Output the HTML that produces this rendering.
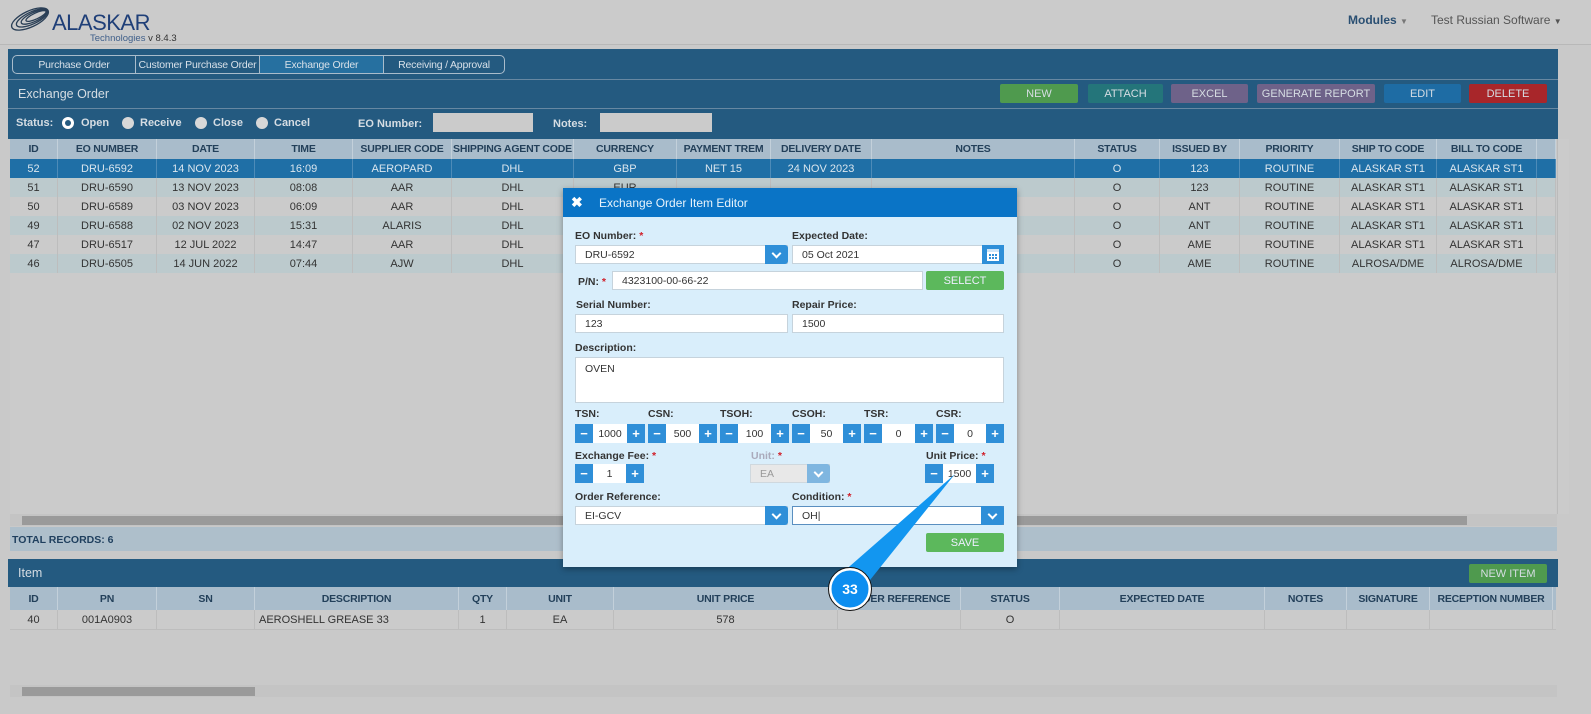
<!DOCTYPE html><html><head><style>
*{box-sizing:border-box;margin:0;padding:0;white-space:nowrap}
body{width:1591px;height:714px;background:#c9c9c9;font-family:"Liberation Sans",sans-serif;font-size:11px;color:#333;position:relative;overflow:hidden}
.a{position:absolute}
.c{display:flex;align-items:center;justify-content:center}
.th{position:absolute;top:0;height:100%;display:flex;align-items:center;justify-content:center;font-weight:bold;color:#23405a;border-right:1px solid #c3d0da;font-size:10.5px;letter-spacing:-0.2px;overflow:hidden}
.td{position:absolute;top:0;height:100%;display:flex;align-items:center;justify-content:center;border-right:1px solid #bdbdbd}
.btn{position:absolute;top:84px;height:19px;border-radius:2px;color:#d6dde3;font-size:11px;display:flex;align-items:center;justify-content:center}
.lbl{position:absolute;font-weight:bold;color:#333;font-size:10.5px}
.req{color:#d0202a}
.inp{position:absolute;background:#fff;border:1px solid #c6d3dc;height:19px;display:flex;align-items:center;padding-left:9px;font-size:10.5px}
.dd{position:absolute;right:-1px;top:-1px;width:23px;height:19px;background:#2f8fd8;border-radius:0 3px 3px 0}
.dd:after{content:"";position:absolute;left:8px;top:5px;width:5px;height:5px;border-right:2px solid #fff;border-bottom:2px solid #fff;transform:rotate(45deg)}
.sp{position:absolute;height:19px;display:flex}
.sp .m,.sp .p{width:18px;background:#2f8fd8;color:#fff;font-weight:bold;display:flex;align-items:center;justify-content:center;font-size:13px}
.sp .v{flex:1;background:#fff;display:flex;align-items:center;justify-content:center;font-size:10.5px}
.radio{position:absolute;top:117px;width:12px;height:12px;border-radius:50%;background:#d8d8d8}
</style></head><body>
<div class="a" style="left:0;top:0;width:1591px;height:45px;background:#cbcbcb;border-bottom:1px solid #b8b8b8"></div>
<svg class="a" style="left:8px;top:4px" width="60" height="30" viewBox="0 0 60 30"><g fill="none" stroke="#2a3f56" stroke-width="1.3"><ellipse cx="22" cy="15" rx="20" ry="8" transform="rotate(-25 22 15)"/><ellipse cx="24" cy="14" rx="17" ry="6" transform="rotate(-25 24 14)"/><ellipse cx="26" cy="13" rx="14" ry="4.5" transform="rotate(-25 26 13)"/><ellipse cx="28" cy="12" rx="11" ry="3" transform="rotate(-25 28 12)"/></g></svg>
<div class="a" style="left:52px;top:10px;font-size:22px;color:#1f3f78;letter-spacing:-0.5px">ALASKAR</div>
<div class="a" style="left:90px;top:33px;font-size:9.5px;color:#3f5f8a">Technologies <span style="color:#333">v 8.4.3</span></div>
<div class="a" style="left:1348px;top:13px;font-size:12px;font-weight:bold;color:#2a4f72">Modules <span style="font-size:8px;color:#777">▼</span></div>
<div class="a" style="left:1431px;top:13px;font-size:12px;color:#555">Test Russian Software <span style="font-size:8px">▼</span></div>
<div class="a" style="left:8px;top:49px;width:1550px;height:90px;background:#245a80"></div>
<div class="a" style="left:12px;top:55px;width:493px;height:19px;border:1px solid #a9bccb;border-radius:5px;display:flex;color:#d7e0e8;overflow:hidden;font-size:10.5px;letter-spacing:-0.2px">
<div class="c" style="width:123px;border-right:1px solid #a9bccb">Purchase Order</div>
<div class="c" style="width:124px;border-right:1px solid #a9bccb">Customer Purchase Order</div>
<div class="c" style="width:124px;border-right:1px solid #a9bccb;background:#2670a0">Exchange Order</div>
<div class="c" style="flex:1">Receiving / Approval</div></div>
<div class="a" style="left:8px;top:79px;width:1550px;border-top:1px solid #6788a2"></div>
<div class="a" style="left:18px;top:87px;font-size:12.5px;color:#d6dde3">Exchange Order</div>
<div class="btn" style="left:1000px;width:78px;background:#4f9a4e">NEW</div>
<div class="btn" style="left:1088px;width:75px;background:#24757a">ATTACH</div>
<div class="btn" style="left:1171px;width:77px;background:#6e6289">EXCEL</div>
<div class="btn" style="left:1257px;width:118px;background:#6e6289">GENERATE REPORT</div>
<div class="btn" style="left:1384px;width:77px;background:#1e6ca4">EDIT</div>
<div class="btn" style="left:1469px;width:78px;background:#a8262a">DELETE</div>
<div class="a" style="left:8px;top:108px;width:1550px;border-top:1px solid #6788a2"></div>
<div class="a" style="left:16px;top:117px;font-weight:bold;color:#d6dde3">Status:</div>
<div class="radio" style="left:62px;background:#fff"><div style="position:absolute;left:3px;top:3px;width:6px;height:6px;border-radius:50%;background:#245a80"></div></div>
<div class="a" style="left:81px;top:117px;font-weight:bold;color:#d6dde3">Open</div>
<div class="radio" style="left:122px"></div><div class="a" style="left:140px;top:117px;font-weight:bold;color:#d6dde3">Receive</div>
<div class="radio" style="left:195px"></div><div class="a" style="left:213px;top:117px;font-weight:bold;color:#d6dde3">Close</div>
<div class="radio" style="left:256px"></div><div class="a" style="left:274px;top:117px;font-weight:bold;color:#d6dde3">Cancel</div>
<div class="a" style="left:358px;top:118px;font-weight:bold;color:#d6dde3">EO Number:</div>
<div class="a" style="left:433px;top:113px;width:100px;height:19px;background:#cbcbcb"></div>
<div class="a" style="left:553px;top:118px;font-weight:bold;color:#d6dde3">Notes:</div>
<div class="a" style="left:600px;top:113px;width:112px;height:19px;background:#cbcbcb"></div>
<div class="a" id="mh" style="left:10px;top:139px;width:1546px;height:20px;background:#a9bccb"></div>
<div class="a" style="left:10px;top:159px;width:1546px;height:355px;background:#cbcbcb"></div>
<div id="mrows"></div>
<div class="a" style="left:1557px;top:139px;width:12px;height:375px;background:#cbcbcb;border-left:1px solid #bbb"></div>
<div class="a" style="left:10px;top:514px;width:1547px;height:12px;background:#c4c4c4"></div>
<div class="a" style="left:22px;top:516px;width:1445px;height:9px;background:#9a9a9a"></div>
<div class="a" style="left:10px;top:527px;width:1547px;height:24px;background:#aebfcb"></div>
<div class="a" style="left:12px;top:534px;font-weight:bold;color:#1f3f5e;font-size:10.5px">TOTAL RECORDS: 6</div>
<div class="a" style="left:8px;top:559px;width:1550px;height:28px;background:#245a80"></div>
<div class="a" style="left:18px;top:566px;font-size:12.5px;color:#d6dde3">Item</div>
<div class="a c" style="left:1469px;top:564px;width:78px;height:19px;background:#4f9a4e;color:#d6dde3;border-radius:2px">NEW ITEM</div>
<div class="a" id="ih" style="left:10px;top:587px;width:1546px;height:23px;background:#a9bccb"></div>
<div id="irows"></div>
<div class="a" style="left:10px;top:685px;width:1547px;height:12px;background:#c4c4c4"></div>
<div class="a" style="left:22px;top:687px;width:233px;height:9px;background:#9a9a9a"></div>
<div class="a" style="left:563px;top:188px;width:454px;height:379px;background:#d9eefb;box-shadow:0 2px 6px rgba(0,0,0,.35)"></div>
<div class="a" style="left:563px;top:188px;width:454px;height:29px;background:#0a74c6"></div>
<div class="a" style="left:571px;top:194px;color:#fff;font-size:14px;font-weight:bold">✖</div>
<div class="a" style="left:599px;top:196px;color:#e8f3fb;font-size:12px">Exchange Order Item Editor</div>
<div class="lbl" style="left:575px;top:230px">EO Number: <span class="req">*</span></div>
<div class="inp" style="left:575px;top:245px;width:213px">DRU-6592<div class="dd"></div></div>
<div class="lbl" style="left:792px;top:230px">Expected Date:</div>
<div class="inp" style="left:792px;top:245px;width:212px">05 Oct 2021<div class="a" style="right:-1px;top:-1px;width:22px;height:19px;background:#2f8fd8"><svg width="22" height="19"><rect x="5" y="4" width="12" height="12" fill="#fff"/><rect x="5" y="4" width="12" height="3" fill="#cfe6f8"/><g fill="#2f8fd8"><rect x="7" y="9" width="2" height="2"/><rect x="10" y="9" width="2" height="2"/><rect x="13" y="9" width="2" height="2"/><rect x="7" y="12" width="2" height="2"/><rect x="10" y="12" width="2" height="2"/><rect x="13" y="12" width="2" height="2"/></g></svg></div></div>
<div class="lbl" style="left:578px;top:276px">P/N: <span class="req">*</span></div>
<div class="inp" style="left:612px;top:271px;width:311px">4323100-00-66-22</div>
<div class="a c" style="left:926px;top:271px;width:78px;height:19px;background:#5cb85c;color:#eef;border-radius:2px">SELECT</div>
<div class="lbl" style="left:576px;top:299px">Serial Number:</div>
<div class="inp" style="left:575px;top:314px;width:213px">123</div>
<div class="lbl" style="left:792px;top:299px">Repair Price:</div>
<div class="inp" style="left:792px;top:314px;width:212px">1500</div>
<div class="lbl" style="left:575px;top:342px">Description:</div>
<div class="inp" style="left:575px;top:357px;width:429px;height:46px;align-items:flex-start;padding-top:5px">OVEN</div>
<div class="lbl" style="left:575px;top:408px">TSN:</div><div class="lbl" style="left:648px;top:408px">CSN:</div><div class="lbl" style="left:720px;top:408px">TSOH:</div><div class="lbl" style="left:792px;top:408px">CSOH:</div><div class="lbl" style="left:864px;top:408px">TSR:</div><div class="lbl" style="left:936px;top:408px">CSR:</div>
<div class="sp" style="left:575px;top:424px;width:70px"><div class="m">−</div><div class="v">1000</div><div class="p">+</div></div>
<div class="sp" style="left:648px;top:424px;width:69px"><div class="m">−</div><div class="v">500</div><div class="p">+</div></div>
<div class="sp" style="left:720px;top:424px;width:69px"><div class="m">−</div><div class="v">100</div><div class="p">+</div></div>
<div class="sp" style="left:792px;top:424px;width:69px"><div class="m">−</div><div class="v">50</div><div class="p">+</div></div>
<div class="sp" style="left:864px;top:424px;width:69px"><div class="m">−</div><div class="v">0</div><div class="p">+</div></div>
<div class="sp" style="left:936px;top:424px;width:68px"><div class="m">−</div><div class="v">0</div><div class="p">+</div></div>
<div class="lbl" style="left:575px;top:450px">Exchange Fee: <span class="req">*</span></div>
<div class="sp" style="left:575px;top:464px;width:69px"><div class="m">−</div><div class="v">1</div><div class="p">+</div></div>
<div class="lbl" style="left:751px;top:450px;color:#aab">Unit: <span class="req">*</span></div>
<div class="inp" style="left:750px;top:464px;width:80px;background:#e8e8e8;color:#999;border-color:#cfd8de">EA<div class="dd" style="background:#7fb6e0"></div></div>
<div class="lbl" style="left:926px;top:450px">Unit Price: <span class="req">*</span></div>
<div class="sp" style="left:925px;top:464px;width:69px"><div class="m">−</div><div class="v">1500</div><div class="p">+</div></div>
<div class="lbl" style="left:575px;top:491px">Order Reference:</div>
<div class="inp" style="left:575px;top:506px;width:213px">EI-GCV<div class="dd"></div></div>
<div class="lbl" style="left:792px;top:491px">Condition: <span class="req">*</span></div>
<div class="inp" style="left:792px;top:506px;width:212px;border-color:#5a8fc0">OH|<div class="dd"></div></div>
<div class="a c" style="left:926px;top:533px;width:78px;height:19px;background:#5cb85c;color:#eef;border-radius:2px">SAVE</div>
<svg class="a" style="left:0;top:0" width="1591" height="714"><polygon points="955,474 834,580 866,585" fill="#1296f0"/><circle cx="850" cy="589" r="20" fill="#0d8ef0" stroke="#fff" stroke-width="3"/><circle cx="850" cy="589" r="21.5" fill="none" stroke="#111" stroke-width="1"/><text x="850" y="594" text-anchor="middle" font-family="Liberation Sans" font-weight="bold" font-size="14" fill="#fff">33</text></svg>
<script>
function hdr(id,cols,names){var e=document.getElementById(id),h='';for(var i=0;i<names.length;i++){h+='<div class="th" style="left:'+(cols[i]-10)+'px;width:'+(cols[i+1]-cols[i])+'px">'+names[i]+'</div>';}e.innerHTML=h;}
var mc=[10,58,157,255,353,452,574,677,771,872,1075,1160,1240,1340,1437,1537,1556];
hdr('mh',mc,['ID','EO NUMBER','DATE','TIME','SUPPLIER CODE','SHIPPING AGENT CODE','CURRENCY','PAYMENT TREM','DELIVERY DATE','NOTES','STATUS','ISSUED BY','PRIORITY','SHIP TO CODE','BILL TO CODE','']);
var rows=[['52','DRU-6592','14 NOV 2023','16:09','AEROPARD','DHL','GBP','NET 15','24 NOV 2023','','O','123','ROUTINE','ALASKAR ST1','ALASKAR ST1',''],
['51','DRU-6590','13 NOV 2023','08:08','AAR','DHL','EUR','','','','O','123','ROUTINE','ALASKAR ST1','ALASKAR ST1',''],
['50','DRU-6589','03 NOV 2023','06:09','AAR','DHL','','','','','O','ANT','ROUTINE','ALASKAR ST1','ALASKAR ST1',''],
['49','DRU-6588','02 NOV 2023','15:31','ALARIS','DHL','','','','','O','ANT','ROUTINE','ALASKAR ST1','ALASKAR ST1',''],
['47','DRU-6517','12 JUL 2022','14:47','AAR','DHL','','','','','O','AME','ROUTINE','ALASKAR ST1','ALASKAR ST1',''],
['46','DRU-6505','14 JUN 2022','07:44','AJW','DHL','','','','','O','AME','ROUTINE','ALROSA/DME','ALROSA/DME','']];
var h='';rows.forEach(function(r,k){var bg=k==0?'#1f6fa6':(k%2?'#bccacd':'#cbcbcb');var col=k==0?'#dbe6ee':'#333';h+='<div class="a" style="left:10px;top:'+(159+k*19)+'px;width:1546px;height:19px;background:'+bg+';color:'+col+'">';for(var i=0;i<r.length;i++)h+='<div class="td" style="left:'+(mc[i]-10)+'px;width:'+(mc[i+1]-mc[i])+'px;'+(k==0?'border-color:#4d8bb8':'')+'">'+r[i]+'</div>';h+='</div>';});
document.getElementById('mrows').innerHTML=h;
var ic=[10,58,157,255,459,507,614,838,961,1060,1265,1347,1430,1553];
hdr('ih',ic,['ID','PN','SN','DESCRIPTION','QTY','UNIT','UNIT PRICE','ORDER REFERENCE','STATUS','EXPECTED DATE','NOTES','SIGNATURE','RECEPTION NUMBER']);
var ir=['40','001A0903','','AEROSHELL GREASE 33','1','EA','578','','O','','','',''];
h='<div class="a" style="left:10px;top:610px;width:1546px;height:20px;background:#cbcbcb;border-bottom:1px solid #bdbdbd">';for(var i=0;i<ir.length;i++)h+='<div class="td" style="left:'+(ic[i]-10)+'px;width:'+(ic[i+1]-ic[i])+'px;'+(i==3?'justify-content:flex-start;padding-left:4px':'')+'">'+ir[i]+'</div>';h+='</div>';
document.getElementById('irows').innerHTML=h;
</script>
</body></html>
